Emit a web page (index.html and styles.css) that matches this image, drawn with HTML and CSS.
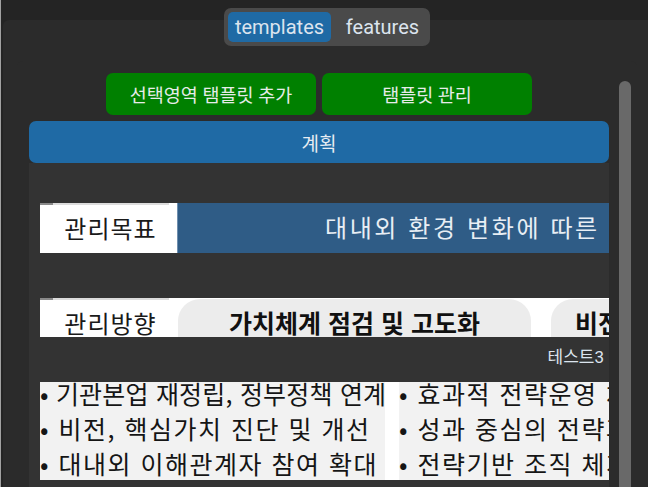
FILE: index.html
```html
<!DOCTYPE html>
<html lang="ko">
<head>
<meta charset="utf-8">
<title>templates</title>
<link rel="stylesheet" href="styles.css">
</head>
<body>
<div class="app">
  <div class="tabs">
    <div class="tab active">templates</div>
    <div class="tab">features</div>
  </div>
  <div class="panel">
    <div class="frame">
      <div class="content">
        <div class="actions">
          <div class="btn">선택영역 탬플릿 추가</div>
          <div class="btn">탬플릿 관리</div>
        </div>
        <div class="section-title">계획</div>
        <div class="section">
          <div class="shot goal">
            <div class="label"><div class="rule"></div><span class="label-text">관리목표</span></div>
            <div class="goal-text">대내외 환경 변화에 따른 전략체계 고도화</div>
          </div>
          <div class="shot direction">
            <div class="label"><div class="rule"></div><span class="label-text">관리방향</span></div>
            <div class="pill main">가치체계 점검 및 고도화</div>
            <div class="pill next">비전 체계 정립</div>
          </div>
          <div class="caption">테스트3</div>
          <div class="shot bullets">
            <ul class="col left">
              <li class="tight">• 기관본업 재정립, 정부정책 연계</li>
              <li>• 비전, 핵심가치 진단 및 개선</li>
              <li>• 대내외 이해관계자 참여 확대</li>
            </ul>
            <ul class="col right">
              <li>• 효과적 전략운영 체계 구축</li>
              <li>• 성과 중심의 전략과제 관리</li>
              <li>• 전략기반 조직 체계 정비</li>
            </ul>
          </div>
        </div>
      </div>
      <div class="scrollbar"></div>
    </div>
  </div>
</div>
</body>
</html>
```

FILE: styles.css
```css
* { box-sizing: border-box; }

html, body {
  margin: 0;
  padding: 0;
}

body {
  width: 648px;
  height: 487px;
  overflow: hidden;
  background: #242424;
  border-left: 1px solid #a2a2a2;
  font-family: Roboto, "Noto Sans CJK KR", sans-serif;
  color: #dce4ee;
}

.app {
  display: flex;
  flex-direction: column;
  height: 100%;
}

.tabs {
  position: relative;
  z-index: 1;
  align-self: center;
  display: flex;
  width: 206px;
  height: 38px;
  margin: 8px 0 -26px 5px;
  padding: 4px;
  background: #4a4a4a;
  border-radius: 7px;
}

.tab {
  display: flex;
  align-items: center;
  justify-content: center;
  font-size: 20px;
  color: #dce4ee;
  border-radius: 5px;
}

.tab.active {
  width: 103px;
  background: #1f6aa5;
}

.tab:not(.active) {
  flex: 1;
  padding-left: 8px;
}

.panel {
  flex: 1;
  min-height: 0;
  margin-left: 2px;
  padding: 41px 11px 0 14px;
  background: #2b2b2b;
  border-radius: 6px 0 0 0;
}

.frame {
  display: flex;
  height: 100%;
  padding: 12px 6px 0 12px;
  background: #2b2b2b;
  border-radius: 6px 6px 0 0;
}

.content {
  width: 580px;
  display: flex;
  flex-direction: column;
}

.scrollbar {
  width: 12px;
  margin: 8px 0 0 10px;
  height: 430px;
  background: #696969;
  border-radius: 6px;
}

.actions {
  display: flex;
  justify-content: center;
  gap: 6px;
}

.btn {
  width: 210px;
  height: 42px;
  display: flex;
  align-items: center;
  justify-content: center;
  background: #008000;
  border-radius: 7px;
  font-size: 18.5px;
  color: #e6ece9;
}

.section-title {
  margin-top: 6px;
  height: 42px;
  display: flex;
  align-items: center;
  justify-content: center;
  background: #1f6aa5;
  border-radius: 7px;
  font-size: 19px;
  color: #e6ecf2;
}

.section {
  flex: 1;
  background: #333333;
  padding: 40px 5px 0 11px;
  overflow: hidden;
  display: flex;
  flex-direction: column;
}

.shot {
  flex: none;
  width: 720px;
  display: flex;
  background: #ffffff;
  overflow: hidden;
  font-family: "Noto Sans CJK KR", sans-serif;
}

.label {
  flex: none;
  width: 137px;
  display: flex;
  flex-direction: column;
  background: #ffffff;
}

.rule {
  width: 129px;
  height: 2px;
  background: linear-gradient(90deg, #8a8a8a 0 13px, #dcdcdc 13px);
}

.label-text {
  font-size: 24px;
  line-height: 24px;
  letter-spacing: 1px;
  color: #1a1a1a;
  text-align: center;
  padding-left: 4px;
}

.goal {
  height: 50px;
}

.goal .label-text {
  margin-top: 11px;
}

.goal-text {
  flex: 1;
  background: #2f5c86;
  border-left: 1px solid #6f8fae;
  color: #e8eef4;
  font-size: 24px;
  line-height: 48px;
  letter-spacing: 2.6px;
  padding-left: 147px;
  white-space: nowrap;
}

.direction {
  height: 39px;
  margin-top: 45px;
}

.direction .label-text {
  margin-top: 11px;
}

.pill {
  flex: none;
  height: 60px;
  margin: 1px 19px 0 1px;
  padding-top: 11px;
  background: #ececec;
  border-radius: 22px;
  text-align: center;
  font-size: 25px;
  line-height: 25px;
  font-weight: 700;
  color: #111111;
  white-space: nowrap;
}

.pill.main {
  width: 353px;
}

.pill.next {
  width: 200px;
  margin-right: 0;
}

.caption {
  flex: none;
  align-self: flex-end;
  margin: 10px 0 15px 0;
  font-family: Roboto, "Noto Sans CJK KR", sans-serif;
  font-size: 17px;
  line-height: 20px;
  color: #dce4ee;
}

.bullets {
  height: 98px;
  gap: 14px;
}

.col {
  list-style: none;
  margin: 0;
  padding: 0;
  background: #f2f2f2;
  font-size: 25px;
  line-height: 35px;
  letter-spacing: 1.5px;
  color: #151515;
  white-space: nowrap;
  overflow: hidden;
}

.col li {
  position: relative;
  top: -6px;
}

.col li.tight {
  letter-spacing: 0.2px;
}

.col.left {
  width: 345px;
  flex: none;
}

.col.right {
  flex: 1;
}
```
